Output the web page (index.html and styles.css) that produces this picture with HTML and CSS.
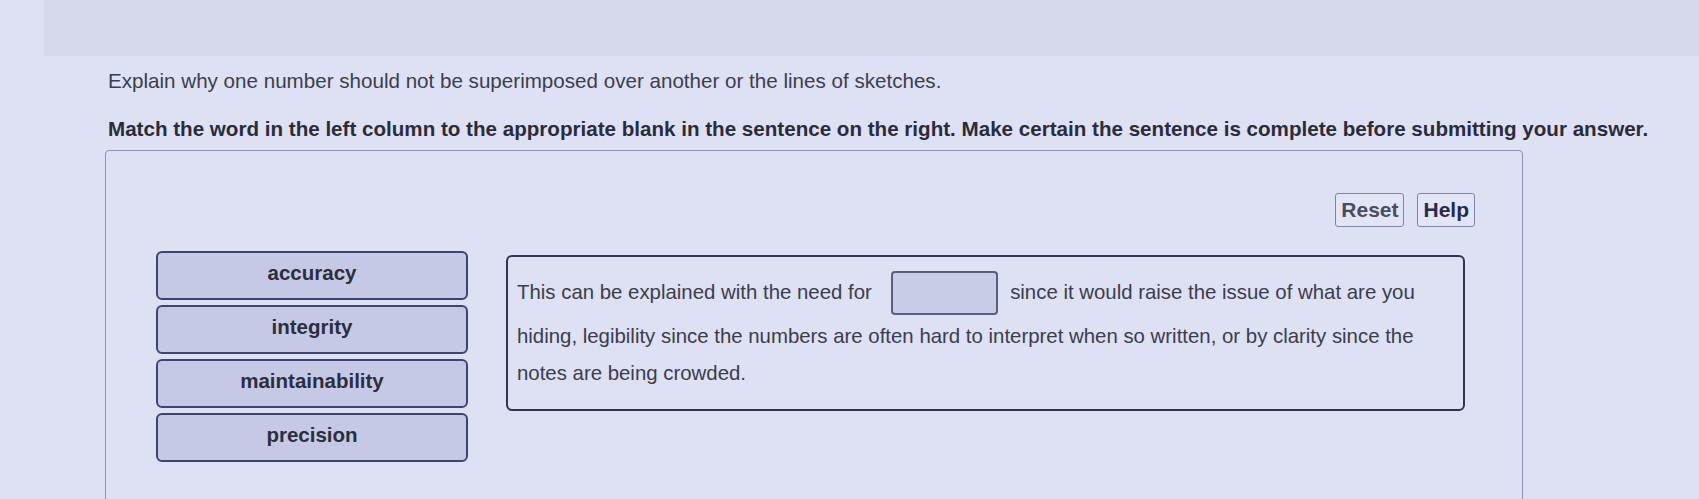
FILE: index.html
```html
<!DOCTYPE html>
<html lang="en">
<head>
<meta charset="utf-8">
<title>Matching question</title>
<link rel="stylesheet" href="styles.css">
</head>
<body>
<div class="topband"></div>
<main class="content">
  <p class="prompt">Explain why one number should not be superimposed over another or the lines of sketches.</p>
  <p class="instructions">Match the word in the left column to the appropriate blank in the sentence on the right. Make certain the sentence is complete before submitting your answer.</p>
  <section class="panel">
    <div class="toolbar">
      <button class="btn btn-reset">Reset</button>
      <button class="btn btn-help">Help</button>
    </div>
    <div class="work">
      <div class="tiles">
        <div class="tile">accuracy</div>
        <div class="tile">integrity</div>
        <div class="tile">maintainability</div>
        <div class="tile">precision</div>
      </div>
      <div class="sentence">This can be explained with the need for <span class="blank"></span> since it would raise the issue of what are you hiding, legibility since the numbers are often hard to interpret when so written, or by clarity since the notes are being crowded.</div>
    </div>
  </section>
</main>
</body>
</html>
```

FILE: styles.css
```css
html, body {
  margin: 0;
  padding: 0;
}
body {
  background: #dee0f4;
  font-family: "Liberation Sans", Arial, sans-serif;
  color: #3a3c4a;
  height: 499px;
  overflow: hidden;
}
.topband {
  height: 56px;
  margin-left: 44px;
  background: #d6d8ec;
}
.content {
  padding-left: 108px;
}
.prompt {
  margin: 12px 0 0 0;
  font-size: 20.6px;
  line-height: 26px;
  color: #3c3e4c;
}
.instructions {
  margin: 22px 0 0 0;
  font-size: 20.6px;
  line-height: 26px;
  font-weight: bold;
  color: #2a2c3a;
}
.panel {
  margin: 8px 0 0 -3px;
  width: 1418px;
  height: 400px;
  border: 1px solid #8e92b0;
  border-radius: 4px;
  box-sizing: border-box;
}
.toolbar {
  display: flex;
  justify-content: flex-end;
  gap: 13px;
  padding: 42px 47px 0 0;
}
.btn {
  font-family: "Liberation Sans", Arial, sans-serif;
  font-size: 21px;
  font-weight: bold;
  height: 34px;
  padding: 0 5px;
  border: 1px solid #7d86a8;
  border-radius: 3px;
  background: #e2e5f5;
  color: #4a4d5c;
}
.btn-help {
  color: #262a4c;
}
.work {
  display: flex;
  align-items: flex-start;
  gap: 38px;
  padding: 24px 0 0 50px;
}
.tiles {
  display: flex;
  flex-direction: column;
  gap: 5px;
  width: 312px;
}
.tile {
  height: 49px;
  box-sizing: border-box;
  border: 2px solid #3e4470;
  border-radius: 6px;
  background: #c6c9e5;
  text-align: center;
  font-size: 20.5px;
  font-weight: bold;
  line-height: 39px;
  color: #2c2e3c;
}
.sentence {
  margin-top: 4px;
  width: 959px;
  height: 156px;
  box-sizing: border-box;
  border: 2px solid #2f3450;
  border-radius: 6px;
  padding: 14px 30px 0 9px;
  font-size: 20.4px;
  line-height: 37px;
  color: #3b3d4c;
}
.blank {
  display: inline-block;
  width: 107px;
  height: 44px;
  vertical-align: -19px;
  margin: 0 6px 3px 14px;
  box-sizing: border-box;
  border: 2px solid #5a5f80;
  border-radius: 4px;
  background: #c9cce7;
}
```
